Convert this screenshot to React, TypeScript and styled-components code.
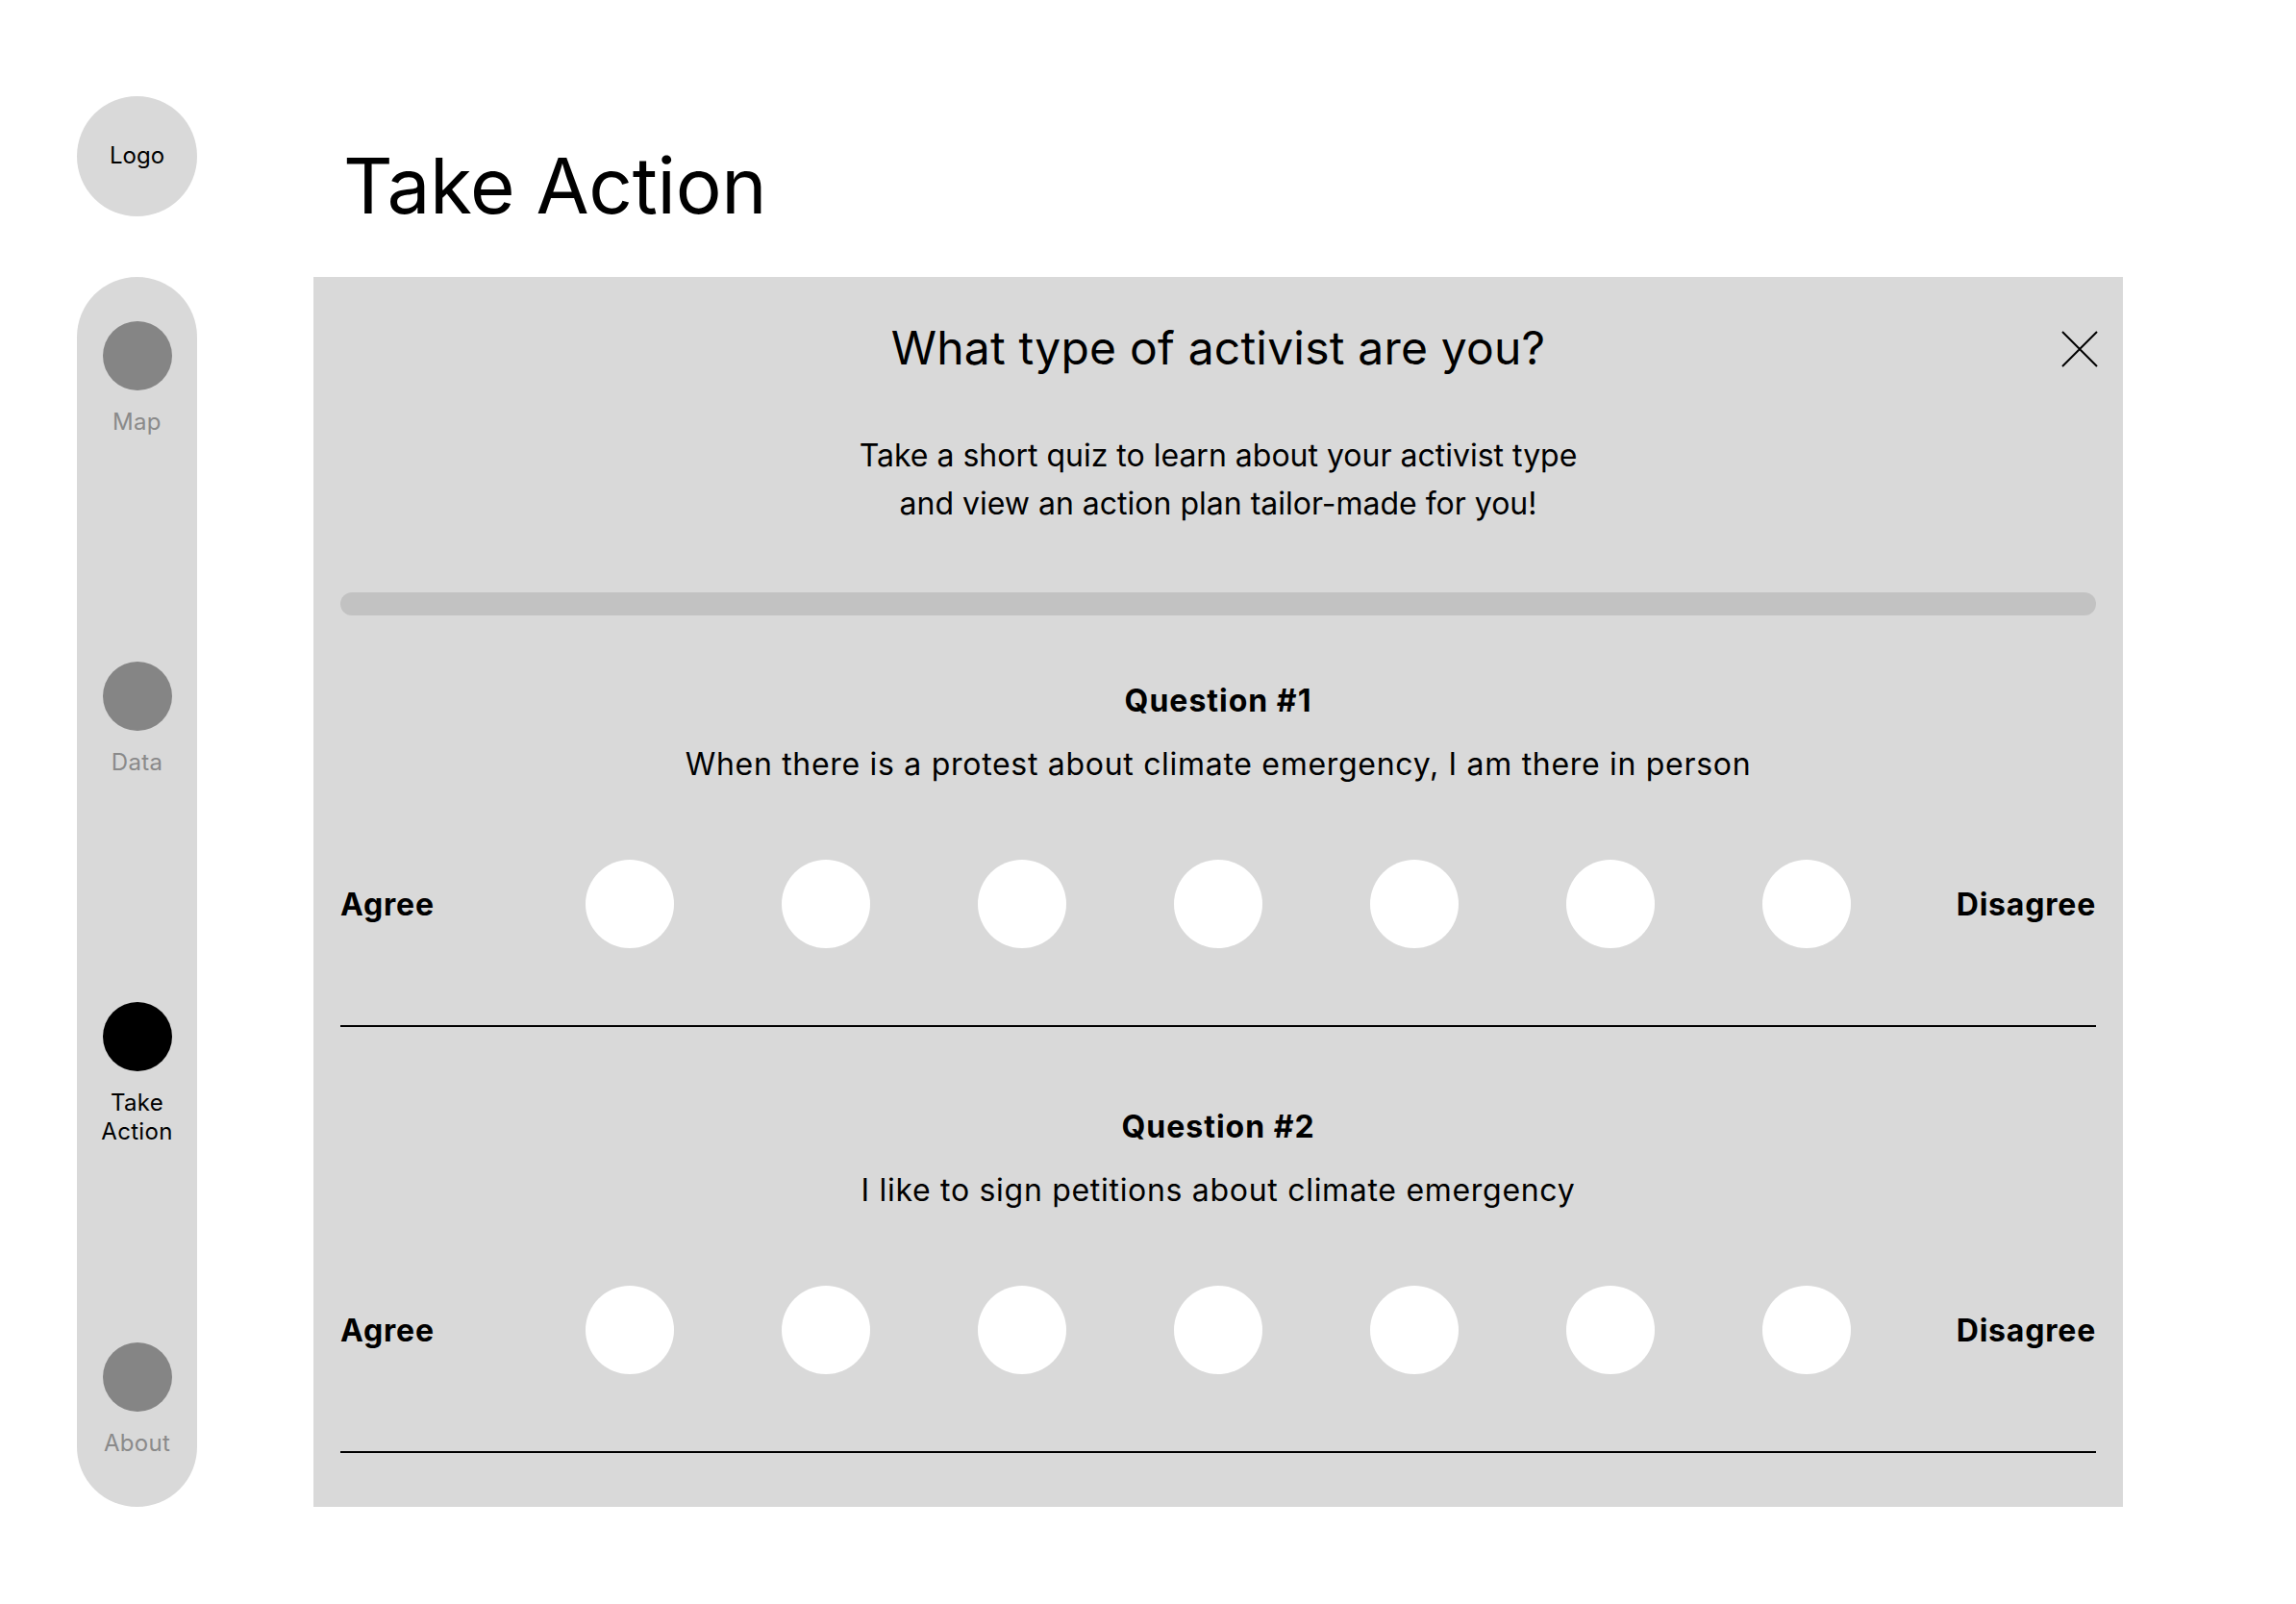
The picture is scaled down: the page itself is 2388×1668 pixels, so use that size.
import styled, { createGlobalStyle } from 'styled-components';

const GlobalStyle = createGlobalStyle`
  html, body {
    margin: 0;
    padding: 0;
    background: #ffffff;
  }
  body {
    font-family: Inter, "Noto Sans", "Liberation Sans", sans-serif;
    color: #000000;
  }
  * {
    box-sizing: border-box;
  }
`;

interface NavEntry {
  label: string[];
  active?: boolean;
}

const navItems: NavEntry[] = [
  { label: ['Map'] },
  { label: ['Data'] },
  { label: ['Take', 'Action'], active: true },
  { label: ['About'] },
];

const questions = [
  { title: 'Question #1', text: 'When there is a protest about climate emergency, I am there in person' },
  { title: 'Question #2', text: 'I like to sign petitions about climate emergency' },
];

const SCALE = 7;

const CloseIcon = () => (
  <svg width="38" height="38" viewBox="0 0 38 38" fill="none">
    <path d="M1 1 L37 37 M37 1 L1 37" stroke="#000" strokeWidth="2" />
  </svg>
);

const App = () => {
  return (
    <>
      <GlobalStyle />
      <Page>
        <Logo>Logo</Logo>
        <PageTitle>Take Action</PageTitle>

        <NavPill>
          {navItems.map(item => (
            <NavItem key={item.label.join(' ')}>
              <NavDot $active={item.active} />
              <NavLabel $active={item.active}>
                {item.label.map(line => (
                  <span key={line}>{line}</span>
                ))}
              </NavLabel>
            </NavItem>
          ))}
        </NavPill>

        <Panel>
          <CloseButton aria-label="Close">
            <CloseIcon />
          </CloseButton>
          <PanelTitle>What type of activist are you?</PanelTitle>
          <PanelIntro>
            Take a short quiz to learn about your activist type
            <br />
            and view an action plan tailor-made for you!
          </PanelIntro>
          <Progress />

          <QuestionList>
            {questions.map(q => (
              <QuestionBlock key={q.title}>
                <QuestionTitle>{q.title}</QuestionTitle>
                <QuestionText>{q.text}</QuestionText>
                <ScaleRow>
                  <ScaleLabel $align="left">Agree</ScaleLabel>
                  <Dots>
                    {Array.from({ length: SCALE }).map((_, i) => (
                      <Dot key={i} />
                    ))}
                  </Dots>
                  <ScaleLabel $align="right">Disagree</ScaleLabel>
                </ScaleRow>
                <Divider />
              </QuestionBlock>
            ))}
          </QuestionList>
        </Panel>
      </Page>
    </>
  );
};

export default App;

// ───────── Styled Components ─────────

const Page = styled.div`
  display: grid;
  grid-template-columns: 125px 1882px;
  grid-template-rows: 188px auto;
  column-gap: 121px;
  padding: 100px 0 100px 80px;
  width: 2388px;
  min-height: 1668px;
`;

const Logo = styled.div`
  width: 125px;
  height: 125px;
  border-radius: 50%;
  background: #d9d9d9;
  display: flex;
  align-items: center;
  justify-content: center;
  padding-bottom: 2px;
  font-size: 24px;
  color: #000;
`;

const PageTitle = styled.h1`
  margin: 53px 0 0 31px;
  font-size: 80px;
  line-height: 80px;
  font-weight: 400;
  letter-spacing: -0.3px;
`;

const NavPill = styled.nav`
  width: 125px;
  height: 1279px;
  border-radius: 63px;
  background: #d9d9d9;
  padding-top: 46px;
  display: grid;
  grid-template-rows: repeat(3, 354px) auto;
  justify-items: center;
`;

const NavItem = styled.div`
  display: flex;
  flex-direction: column;
  align-items: center;
  gap: 18px;
`;

const NavDot = styled.div<{ $active?: boolean }>`
  width: 72px;
  height: 72px;
  border-radius: 50%;
  background: ${p => (p.$active ? '#000000' : '#858585')};
`;

const NavLabel = styled.div<{ $active?: boolean }>`
  display: flex;
  flex-direction: column;
  align-items: center;
  font-size: 24px;
  line-height: 30px;
  letter-spacing: 0.3px;
  color: ${p => (p.$active ? '#000000' : '#8a8a8a')};
`;

const Panel = styled.section`
  position: relative;
  background: #d9d9d9;
  height: 1279px;
  padding: 44px 28px 0;
  display: flex;
  flex-direction: column;
  align-items: center;
`;

const CloseButton = styled.button`
  position: absolute;
  top: 56px;
  right: 26px;
  width: 38px;
  height: 38px;
  padding: 0;
  border: none;
  background: transparent;
  cursor: pointer;
  display: flex;
`;

const PanelTitle = styled.h2`
  margin: 0;
  font-size: 48px;
  line-height: 60px;
  font-weight: 400;
  letter-spacing: 0.2px;
  text-align: center;
`;

const PanelIntro = styled.p`
  margin: 57px 0 0;
  font-size: 32px;
  line-height: 50px;
  text-align: center;
`;

const Progress = styled.div`
  align-self: stretch;
  margin-top: 67px;
  height: 24px;
  border-radius: 12px;
  background: #c2c2c2;
`;

const QuestionList = styled.div`
  align-self: stretch;
  margin-top: 69px;
  display: flex;
  flex-direction: column;
  gap: 84px;
`;

const QuestionBlock = styled.div`
  display: flex;
  flex-direction: column;
  align-items: center;
`;

const QuestionTitle = styled.h3`
  margin: 0;
  font-size: 32px;
  line-height: 40px;
  font-weight: 700;
  letter-spacing: 1px;
`;

const QuestionText = styled.p`
  margin: 26px 0 0;
  font-size: 32px;
  line-height: 40px;
  letter-spacing: 0.7px;
`;

const ScaleRow = styled.div`
  align-self: stretch;
  margin-top: 79px;
  display: grid;
  grid-template-columns: 1fr auto 1fr;
  align-items: center;
`;

const ScaleLabel = styled.span<{ $align: 'left' | 'right' }>`
  font-size: 32px;
  font-weight: 700;
  letter-spacing: 0.8px;
  text-align: ${p => p.$align};
`;

const Dots = styled.div`
  display: flex;
  gap: 112px;
`;

const Dot = styled.button`
  width: 92px;
  height: 92px;
  border-radius: 50%;
  border: none;
  padding: 0;
  background: #ffffff;
  cursor: pointer;
`;

const Divider = styled.hr`
  align-self: stretch;
  margin: 80px 0 0;
  border: none;
  height: 2px;
  background: #000000;
`;
